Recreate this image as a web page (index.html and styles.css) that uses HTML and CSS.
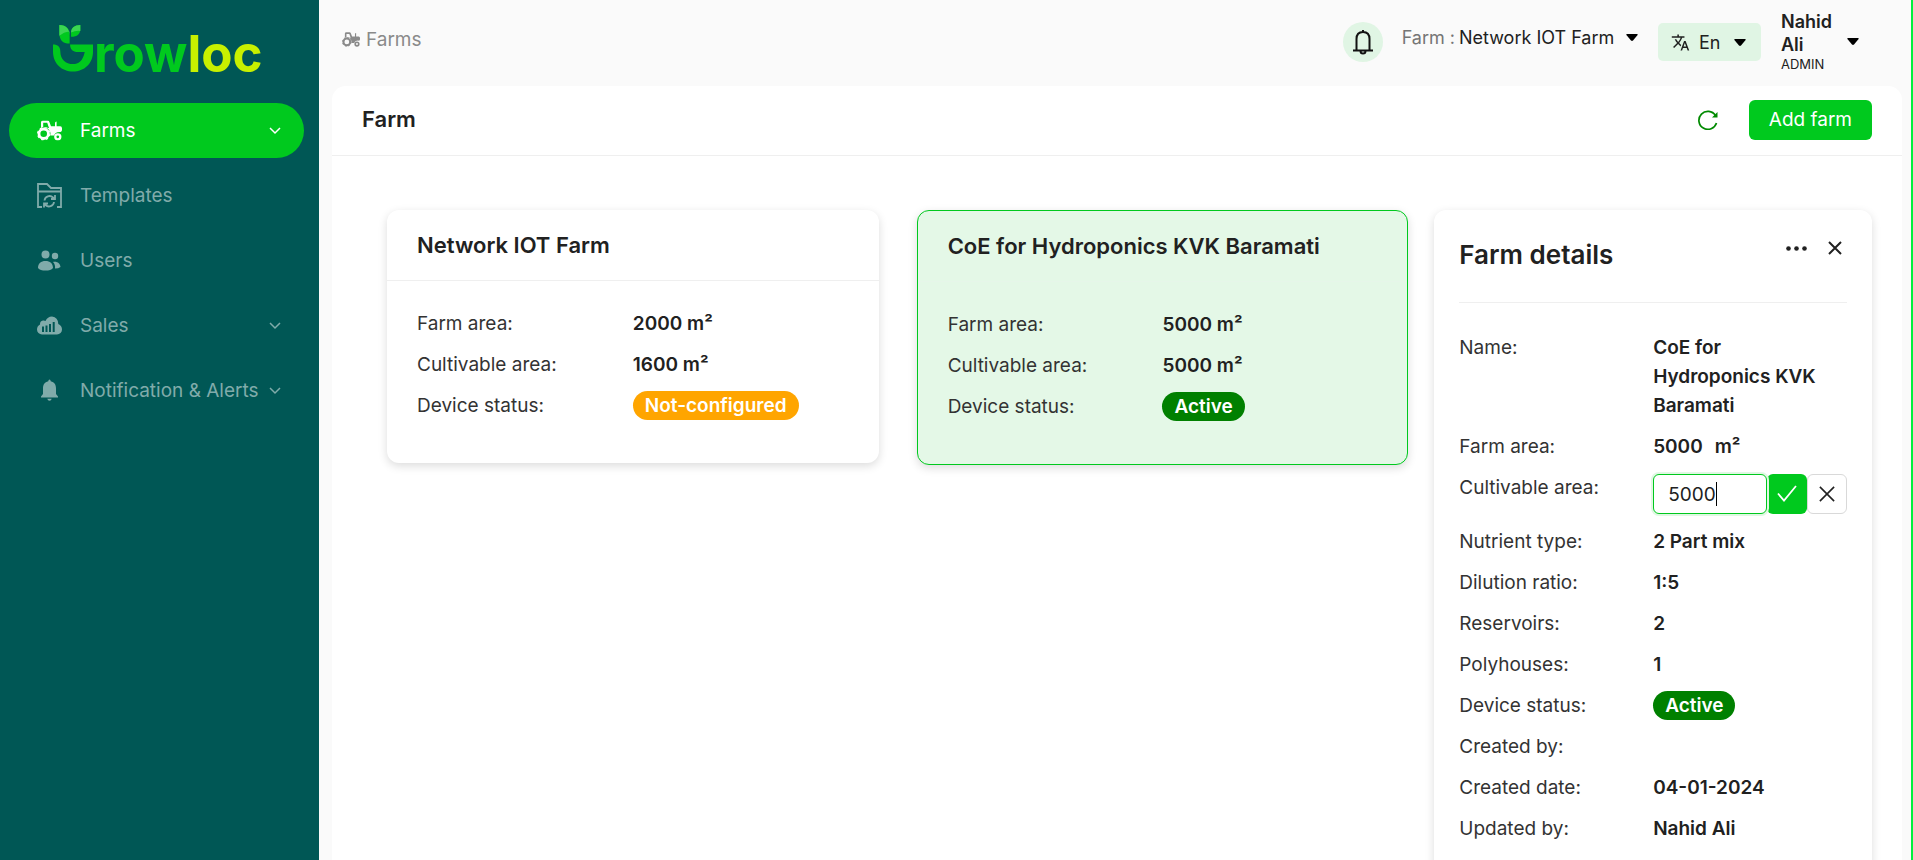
FILE: index.html
```html
<!DOCTYPE html>
<html lang="en">
<head>
<meta charset="utf-8">
<meta name="viewport" content="width=device-width, initial-scale=1">
<title>Growloc - Farms</title>
<link rel="stylesheet" href="styles.css">
</head>
<body>
<svg class="sprite" aria-hidden="true">
  <symbol id="tractor" viewBox="0 0 25 20">
    <path fill-rule="evenodd" d="M4 1.5Q4.200 0 5.800 0H10.500Q11.800 0 12.300 1.200L14 5.800H18V2.500Q18 1.200 19.600 1V2.500Q19.600 3 19.600 5.800H23.200Q25 6 25 7.800V9.500Q25 11 23.500 11.600Q20.500 11.200 18.800 12.600Q17.300 13.800 17.200 15H13.400A7 7 0 0 0 4 7.200ZM6.200 2.200V6.400Q9 6.300 11.400 7.400H12L10.200 2.200Z"/>
    <circle cx="6.700" cy="13.300" r="4.700" fill="none" stroke="currentColor" stroke-width="2.800"/>
    <circle cx="6.700" cy="13.300" r="6.100" fill="none" stroke="currentColor" stroke-width="1.200" stroke-dasharray="2.400 2.390"/>
    <circle cx="20.800" cy="16.300" r="2.500" fill="none" stroke="currentColor" stroke-width="2.300"/>
  </symbol>
  <symbol id="chevron" viewBox="0 0 12 8"><path d="M1 1l5 5 5-5" fill="none" stroke="currentColor" stroke-width="1.500"/></symbol>
  <symbol id="caret" viewBox="0 0 12 7"><path d="M1 0h10q1 .3.600 1L7 6.500q-1 .800-2 0L.400 1Q0 .300 1 0z"/></symbol>
</svg>
<div class="app">
  <aside class="sidebar">
    <a class="logo" href="#" aria-label="Growloc">
      <svg class="logo-mark" viewBox="0 0 42 48" aria-hidden="true">
        <path fill="#00c91e" d="M0 20C5 20 7.500 22.500 7.500 27C7.500 35 13 40 20.500 40C26 40 30.500 37 32.500 27.500H24C20.500 27.500 17.500 25 17.500 20H41V27C41 39.500 32 47.500 20.500 47.500C9 47.500 0 39.500 0 27Z"/>
        <path fill="#00c91e" d="M6.500 0C14 0 17 4.500 17 11V19C10 19 6.500 15 6.500 8Z"/>
        <path fill="#3bd552" d="M6.500 0C14 0 17 4.500 17 11V6.500Q11 7 6.500 11Z"/>
        <path fill="#00c91e" d="M28 0V4C28 9 25 12 18.500 12V8C18.500 3 22 0 28 0Z"/>
        <path fill="#3bd552" d="M28 0V6Q23 5.500 18.500 7.500C18.800 3 22 0 28 0Z"/>
      </svg>
      <span class="logo-text">row<span class="logo-accent">loc</span></span>
    </a>
    <nav class="nav">
      <a class="nav-item active" href="#"><svg class="nav-icon" viewBox="0 0 25 20"><use href="#tractor"/></svg><span class="nav-label">Farms</span><svg class="chevron"><use href="#chevron"/></svg></a>
      <a class="nav-item" href="#"><svg class="nav-icon" viewBox="0 0 25 25"><path fill="none" stroke="currentColor" stroke-width="1.800" d="M5 24H1V1h9l4 4h10v19h-4M1 8.500h23M7.500 17.500a5 5 0 0 1 8.500-3l1.500 1.500M18 12v4h-4M17 19a5 5 0 0 1-8.500 3L7 20.500M7 24.500v-4h4"/></svg><span class="nav-label">Templates</span></a>
      <a class="nav-item" href="#"><svg class="nav-icon" viewBox="0 0 25 22"><circle cx="8.500" cy="5" r="4"/><circle cx="18" cy="6.500" r="3.200"/><path d="M1 18.500C1 14 4 11.500 8.500 11.500S16 14 16 18.500C14.500 20.500 12 21 8.500 21S2.500 20.500 1 18.500zM16 12.500C20 11.500 23.300 14 23.500 17.500Q21.500 19 18 19Q18.500 15 16 12.500z"/></svg><span class="nav-label">Users</span></a>
      <a class="nav-item" href="#"><svg class="nav-icon" viewBox="0 0 25 18"><path fill-rule="evenodd" d="M5 18A5 5 0 0 1 0 13Q0 9.500 3 8Q2.800 4.500 6 4Q7.500 3.800 8.500 4.500Q10.500 0 15 0Q21 .500 21.300 7.500Q25 9 25 13A5 5 0 0 1 20 18ZM5 10V15.500H7V10ZM8.500 9V15.500H10.500V9ZM12 7.500V15.500H14V7.500ZM15.700 5.500V15.500H17.700V5.500Z"/></svg><span class="nav-label">Sales</span><svg class="chevron"><use href="#chevron"/></svg></a>
      <a class="nav-item" href="#"><svg class="nav-icon" viewBox="0 0 25 22"><path d="M12.500 0Q13.600 0 13.700 1.800C17.500 2.600 19 5.500 19 9V14.500L21 17V18H4V17L6 14.500V9C6 5.500 7.500 2.600 11.300 1.800Q11.400 0 12.500 0zM10.300 19.200h4.400Q14.300 21.200 12.500 21.200T10.300 19.200z"/></svg><span class="nav-label">Notification &amp; Alerts</span><svg class="chevron"><use href="#chevron"/></svg></a>
    </nav>
  </aside>
  <div class="content">
    <header class="topbar">
      <a class="crumb" href="#"><svg class="crumb-icon"><use href="#tractor"/></svg>Farms</a>
      <div class="tools">
        <button class="bell" type="button" aria-label="Notifications"><svg viewBox="0 0 20 26"><path fill="none" stroke="currentColor" stroke-width="2" d="M10 1v2M3.500 21V10C3.500 5.500 6 3 10 3s6.500 2.500 6.500 7v11M0 21.500h20M7.500 22a2.500 2.500 0 0 0 5 0"/></svg></button>
        <div class="farm-pick">
          <label for="farm">Farm :</label>
          <select id="farm"><option>Network IOT Farm</option></select>
          <svg class="caret"><use href="#caret"/></svg>
        </div>
        <div class="lang">
          <svg class="lang-icon" viewBox="0 0 24 24"><path d="M12.870 15.070l-2.540-2.510.030-.030A17.520 17.520 0 0 0 14.070 6H17V4h-7V2H8v2H1v2h11.170C11.500 7.920 10.440 9.750 9 11.350 8.070 10.320 7.300 9.190 6.690 8h-2c.730 1.630 1.730 3.170 2.980 4.560l-5.090 5.020L4 19l5-5 3.110 3.110.760-2.040zM18.500 10h-2L12 22h2l1.120-3h4.750L21 22h2l-4.500-12zm-2.620 7l1.620-4.330L19.120 17h-3.240z"/></svg>
          <select aria-label="Language"><option>En</option></select>
          <svg class="caret"><use href="#caret"/></svg>
        </div>
        <button class="user" type="button">
          <span class="user-text"><span class="user-name">Nahid Ali</span><span class="user-role">ADMIN</span></span>
          <svg class="caret"><use href="#caret"/></svg>
        </button>
      </div>
    </header>
    <main class="panel">
      <div class="panel-head">
        <h1>Farm</h1>
        <button class="refresh" type="button" aria-label="Refresh"><svg viewBox="0 0 20 20"><path fill="none" stroke="currentColor" stroke-width="1.700" d="M18.500 13A9 9 0 1 1 17.500 5.500"/><path d="M19.500 2v5.500h-5.500z"/></svg></button>
        <button class="add" type="button">Add farm</button>
      </div>
      <div class="panel-body">
        <div class="cards">
          <article class="card">
            <h2>Network IOT Farm</h2>
            <dl class="rows">
              <dt>Farm area:</dt><dd>2000 m²</dd>
              <dt>Cultivable area:</dt><dd>1600 m²</dd>
              <dt>Device status:</dt><dd><span class="badge warn">Not-configured</span></dd>
            </dl>
          </article>
          <article class="card selected">
            <h2>CoE for Hydroponics KVK Baramati</h2>
            <dl class="rows">
              <dt>Farm area:</dt><dd>5000 m²</dd>
              <dt>Cultivable area:</dt><dd>5000 m²</dd>
              <dt>Device status:</dt><dd><span class="badge ok">Active</span></dd>
            </dl>
          </article>
        </div>
        <section class="details">
          <div class="details-head">
            <h2>Farm details</h2>
            <button class="plain" type="button" aria-label="More"><svg class="more" viewBox="0 0 21 5"><circle cx="2.500" cy="2.500" r="2.300"/><circle cx="10.500" cy="2.500" r="2.300"/><circle cx="18.500" cy="2.500" r="2.300"/></svg></button>
            <button class="plain" type="button" aria-label="Close"><svg class="close" viewBox="0 0 14 14"><path fill="none" stroke="currentColor" stroke-width="2" d="M1 1l12 12M13 1L1 13"/></svg></button>
          </div>
          <dl class="rows">
            <dt>Name:</dt><dd class="name">CoE for Hydroponics KVK Baramati</dd>
            <dt>Farm area:</dt><dd class="spaced"><span>5000</span><span>m²</span></dd>
            <dt><label for="area">Cultivable area:</label></dt>
            <dd class="edit">
              <span class="field"><input id="area" type="text" value="5000"><i class="cursor"></i></span>
              <button class="save" type="button" aria-label="Save"><svg viewBox="0 0 20 18"><path fill="none" stroke="currentColor" stroke-width="1.800" d="M1 8.500l6 7L19 1"/></svg></button>
              <button class="cancel" type="button" aria-label="Cancel"><svg viewBox="0 0 18 18"><path fill="none" stroke="currentColor" stroke-width="1.800" d="M1 1l16 16M17 1L1 17"/></svg></button>
            </dd>
            <dt>Nutrient type:</dt><dd>2 Part mix</dd>
            <dt>Dilution ratio:</dt><dd>1:5</dd>
            <dt>Reservoirs:</dt><dd>2</dd>
            <dt>Polyhouses:</dt><dd>1</dd>
            <dt>Device status:</dt><dd><span class="badge ok">Active</span></dd>
            <dt>Created by:</dt><dd></dd>
            <dt>Created date:</dt><dd>04-01-2024</dd>
            <dt>Updated by:</dt><dd>Nahid Ali</dd>
          </dl>
        </section>
      </div>
    </main>
  </div>
</div>
</body>
</html>
```
FILE: styles.css
```css
:root {
  --green: #00c91e;
  --teal: #005755;
  --tint: #e0f5e4;
  --ink: #212121;
  --line: #efefef;
}
* { box-sizing: border-box; }
body { margin: 0; font: 19px/29px Inter, "Open Sans", sans-serif; color: var(--ink); background: #fafafa; }
h1, h2, dl, dd { margin: 0; }
a { color: inherit; text-decoration: none; }
button, input, select { font: inherit; color: inherit; }
button { border: 0; background: none; padding: 0; cursor: pointer; }
svg { display: block; fill: currentColor; flex: none; }
.sprite { position: absolute; width: 0; height: 0; }
.app { display: flex; height: 100vh; overflow: hidden; border-right: 2px solid #00f03c; }

.sidebar { flex: none; width: 319px; background: var(--teal); color: #fff; padding: 24px 15px 0 9px; }
.logo { display: flex; align-items: flex-start; height: 79px; padding-left: 44px; color: var(--green); }
.logo-mark { width: 41px; height: 49px; }
.logo-text { font-size: 51px; line-height: 60px; font-weight: 700; }
.logo-accent { color: #c8f000; }
.nav { display: flex; flex-direction: column; gap: 10px; }
.nav-item { display: flex; align-items: center; height: 55px; padding: 0 23px 0 28px; border-radius: 28px; color: #80abaa; white-space: nowrap; }
.nav-item.active { background: var(--green); color: #fff; }
.nav-icon { width: 25px; height: 25px; margin-right: 18px; }
.nav-label { flex: 1; }
.chevron { width: 12px; height: 8px; }

.content { flex: 1; min-width: 0; display: flex; flex-direction: column; padding: 0 9px 0 13px; }
.topbar { flex: none; display: flex; justify-content: space-between; align-items: flex-start; height: 86px; padding: 0 43px 0 10px; }
.crumb { display: flex; align-items: center; gap: 6px; margin-top: 25px; color: #8a8a8a; }
.crumb-icon { width: 18px; height: 15px; }
.tools { display: flex; align-items: flex-start; padding-top: 10px; font-size: 18px; }
select { appearance: none; border: 0; background: none; padding: 0; cursor: pointer; }
.caret { width: 12px; height: 7px; color: #000; pointer-events: none; }
.bell { width: 40px; height: 40px; margin: 12px 19px 0 0; border-radius: 50%; background: var(--tint); display: grid; place-items: center; color: #111; }
.bell svg { width: 20px; height: 26px; }
.farm-pick { display: flex; align-items: center; margin: 13px 20px 0 0; }
.farm-pick label { color: #757575; margin-right: 4px; }
.farm-pick .caret { margin-left: 11px; }
.lang { display: flex; align-items: center; height: 38px; margin: 13px 20px 0 0; padding: 0 15px 0 13px; border-radius: 5px; background: var(--tint); }
.lang-icon { width: 19px; height: 19px; margin-right: 9px; }
.lang .caret { margin-left: 13px; }
.user { display: flex; align-items: center; gap: 12px; text-align: left; }
.user-text { display: block; width: 54px; }
.user-name { display: block; line-height: 23px; font-weight: 600; }
.user-role { display: block; font-size: 13px; line-height: 17px; }

.panel { flex: 1; min-height: 0; background: #fff; border-radius: 14px 14px 0 0; }
.panel-head { display: flex; align-items: center; height: 70px; padding: 0 30px 2px; border-bottom: 1px solid var(--line); }
h1 { flex: 1; font-size: 22px; font-weight: 600; }
.refresh { color: #008a00; margin-right: 31px; }
.refresh svg { width: 20px; height: 20px; }
.add { height: 40px; padding: 0 20px; border-radius: 6px; background: var(--green); color: #fff; }
.panel-body { display: grid; grid-template-columns: 7fr 3fr; gap: 26px; align-items: start; padding: 54px 30px 0 55px; }
.cards { display: grid; grid-template-columns: 1fr 1fr; gap: 38px; align-items: start; }
.card, .details { border-radius: 12px; background: #fff; box-shadow: 0 3px 10px rgba(0, 0, 0, .14); }
.card h2 { padding: 21px 30px 20px; font-size: 22px; font-weight: 600; border-bottom: 1px solid var(--line); }
.card .rows { padding: 28px 30px 43px; }
.card.selected { background: #e4f8e7; border: 1px solid var(--green); }
.selected h2 { border-color: #e6f6e9; }
.rows { display: grid; grid-template-columns: 1fr 1fr; row-gap: 12px; }
dt { color: #333; }
dd { font-weight: 600; min-width: 0; }
.badge { display: block; width: fit-content; padding: 0 12px; border-radius: 15px; color: #fff; }
.warn { background: #ffa500; }
.ok { background: #008000; }

.details { padding: 0 25px 40px; }
.details-head { display: flex; align-items: flex-start; height: 93px; padding: 30px 5px 0 0; margin-bottom: 30px; border-bottom: 1px solid var(--line); }
.details h2 { flex: 1; font-size: 26px; font-weight: 600; }
.plain { height: 16px; margin-left: 21px; display: grid; place-items: center; }
.more { width: 21px; height: 5px; }
.close { width: 14px; height: 14px; }
.name { padding-right: 12px; }
.spaced { display: flex; gap: 12px; }
.edit { display: flex; height: 42px; align-items: center; }
.field { position: relative; flex: 1; min-width: 0; }
.field input { display: block; width: 100%; height: 40px; padding: 0 14px; border: 1px solid var(--green); border-radius: 6px; outline: 0; box-shadow: 0 0 0 2px #e0f8e3; font-weight: 400; background: #fff; }
.cursor { position: absolute; left: 63px; top: 8px; width: 1px; height: 24px; background: #000; }
.save, .cancel { flex: none; width: 40px; height: 40px; border-radius: 6px; display: grid; place-items: center; }
.save { background: var(--green); color: #fff; }
.save svg { width: 20px; height: 18px; }
.cancel { border: 1px solid #d9d9d9; background: #fff; }
.cancel svg { width: 16px; height: 16px; }
```
